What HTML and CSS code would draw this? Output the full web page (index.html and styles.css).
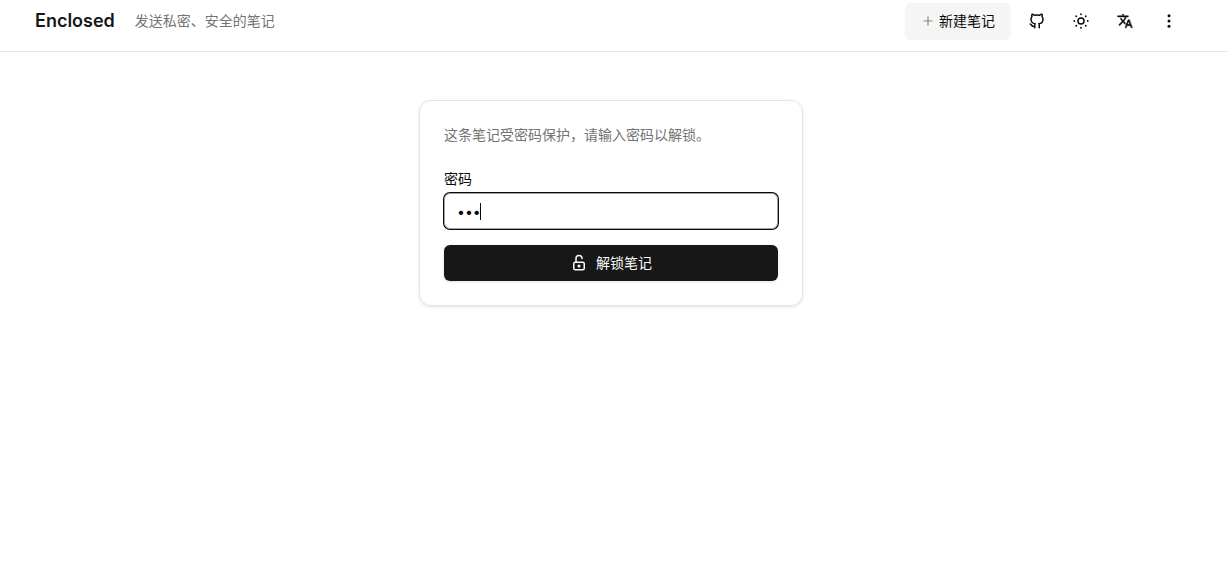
FILE: index.html
```html
<!DOCTYPE html>
<html lang="zh-CN">
<head>
<meta charset="utf-8">
<meta name="viewport" content="width=device-width, initial-scale=1">
<title>Enclosed</title>
<link rel="stylesheet" href="styles.css">
</head>
<body>
<header class="header">
  <div class="brand">
    <a class="brand-name" href="#">Enclosed</a>
    <span class="tagline">发送私密、安全的笔记</span>
  </div>
  <nav class="actions">
    <button class="new-note" type="button">
      <svg class="icon-plus" viewBox="0 0 24 24"><path d="M12 5v14M5 12h14"/></svg>
      新建笔记
    </button>
    <a class="icon-button" href="#" aria-label="GitHub">
      <svg class="icon" viewBox="0 0 24 24"><path d="M9 19c-4.3 1.4-4.3-2.5-6-3m12 5v-3.500c0-1 .1-1.400-.5-2 2.800-.3 5.500-1.400 5.500-6a4.600 4.600 0 0 0-1.300-3.200 4.200 4.200 0 0 0-.1-3.200s-1.100-.3-3.500 1.300a12.300 12.300 0 0 0-6.200 0C6.500 2.800 5.400 3.100 5.400 3.100a4.200 4.200 0 0 0-.1 3.200A4.600 4.600 0 0 0 4 9.500c0 4.600 2.700 5.700 5.500 6-.6.6-.6 1.200-.5 2V21"/></svg>
    </a>
    <button class="icon-button" type="button" aria-label="主题">
      <svg class="icon" viewBox="0 0 24 24"><path d="M8 12a4 4 0 1 0 8 0 4 4 0 1 0-8 0"/><path class="rays" d="M3 12h.01M12 3v.01M20.990 12H21M12 20.990V21M5.600 5.600l.1.1M18.400 5.600l-.1.1M18.300 18.300l.1.1M5.700 18.300l-.1.1"/></svg>
    </button>
    <button class="icon-button" type="button" aria-label="语言">
      <svg class="icon-translate" viewBox="0 0 24 24"><path d="m12.870 15.070-2.540-2.510.03-.03A17.520 17.520 0 0 0 14.070 6H17V4h-7V2H8v2H1v2h11.170C11.500 7.920 10.440 9.750 9 11.350 8.070 10.320 7.300 9.190 6.690 8h-2c.73 1.630 1.730 3.170 2.980 4.560l-5.090 5.020L4 19l5-5 3.110 3.110zM18.500 10h-2L12 22h2l1.120-3h4.750L21 22h2zm-2.620 7 1.620-4.330L19.120 17z"/></svg>
    </button>
    <button class="icon-button" type="button" aria-label="更多">
      <svg class="icon" viewBox="0 0 24 24"><g class="dots"><circle cx="12" cy="5" r="2"/><circle cx="12" cy="12" r="2"/><circle cx="12" cy="19" r="2"/></g></svg>
    </button>
  </nav>
</header>
<main class="main">
  <form class="card">
    <p class="hint">这条笔记受密码保护，请输入密码以解锁。</p>
    <label class="label" for="password">密码</label>
    <div class="field">
      <input class="input" id="password" type="password" value="123">
      <span class="caret"></span>
    </div>
    <button class="unlock" type="button">
      <svg class="icon" viewBox="0 0 24 24"><rect x="5" y="11" width="14" height="10" rx="2"/><circle cx="12" cy="16" r="1"/><path d="M8 11V6a4 4 0 0 1 8 0"/></svg>
      解锁笔记
    </button>
  </form>
</main>
</body>
</html>
```
FILE: styles.css
```css
* {
  box-sizing: border-box;
}

body {
  margin: 0;
  background: #fff;
  color: #0a0a0a;
  font-family: Inter, "Noto Sans CJK SC", sans-serif;
  font-size: 14px;
  line-height: 20px;
}

button,
input {
  font: inherit;
  color: inherit;
}

svg {
  flex: none;
  fill: none;
  stroke: currentColor;
  stroke-width: 2;
  stroke-linecap: round;
  stroke-linejoin: round;
}

.header {
  display: flex;
  align-items: flex-start;
  justify-content: space-between;
  padding: 3px 40px 11px 35px;
  border-bottom: 1px solid #e5e5e5;
}

.brand {
  display: flex;
  align-items: center;
  gap: 20px;
  height: 36px;
}

.brand-name {
  color: #171717;
  font-size: 18px;
  font-weight: 600;
  text-decoration: none;
}

.tagline,
.hint {
  color: #737373;
}

.actions {
  display: flex;
  align-items: flex-start;
  gap: 8px;
}

.new-note {
  display: flex;
  align-items: center;
  gap: 4px;
  height: 37px;
  padding: 0 16px 2px;
  border: 0;
  border-radius: 6px;
  background: #f5f5f5;
}

.icon-button {
  display: flex;
  align-items: center;
  justify-content: center;
  width: 36px;
  height: 36px;
  padding: 0;
  border: 0;
  border-radius: 6px;
  background: none;
  color: #0a0a0a;
}

.icon {
  width: 18px;
  height: 18px;
}

.icon-plus {
  width: 14px;
  height: 14px;
  color: #858585;
}

.icon-translate {
  width: 16px;
  height: 16px;
  fill: currentColor;
  stroke-width: 0.6;
}

.rays {
  stroke-width: 2.4;
}

.dots {
  fill: currentColor;
  stroke: none;
}

.main {
  display: flex;
  justify-content: center;
  padding: 48px 24px;
}

.card {
  display: flex;
  flex-direction: column;
  width: 100%;
  max-width: 384px;
  margin-right: 5px;
  padding: 24px;
  border: 1px solid #e5e5e5;
  border-radius: 12px;
  box-shadow: 0 1px 3px rgba(0, 0, 0, 0.12);
}

.hint {
  margin: 0 0 24px;
}

.label {
  margin-bottom: 4px;
}

.field {
  position: relative;
  margin-bottom: 16px;
}

.input {
  display: block;
  width: 100%;
  height: 36px;
  padding: 4px 12px;
  border: 1px solid #a3a3a3;
  border-radius: 6px;
  outline: 0;
  background: #fff;
  box-shadow: 0 0 0 1px #0a0a0a;
}

.caret {
  position: absolute;
  top: 10px;
  left: 36px;
  width: 1px;
  height: 17px;
  background: #0a0a0a;
}

.unlock {
  display: flex;
  align-items: center;
  justify-content: center;
  gap: 8px;
  height: 36px;
  border: 0;
  border-radius: 6px;
  background: #171717;
  color: #fafafa;
  box-shadow: 0 1px 3px rgba(0, 0, 0, 0.12);
}
```
